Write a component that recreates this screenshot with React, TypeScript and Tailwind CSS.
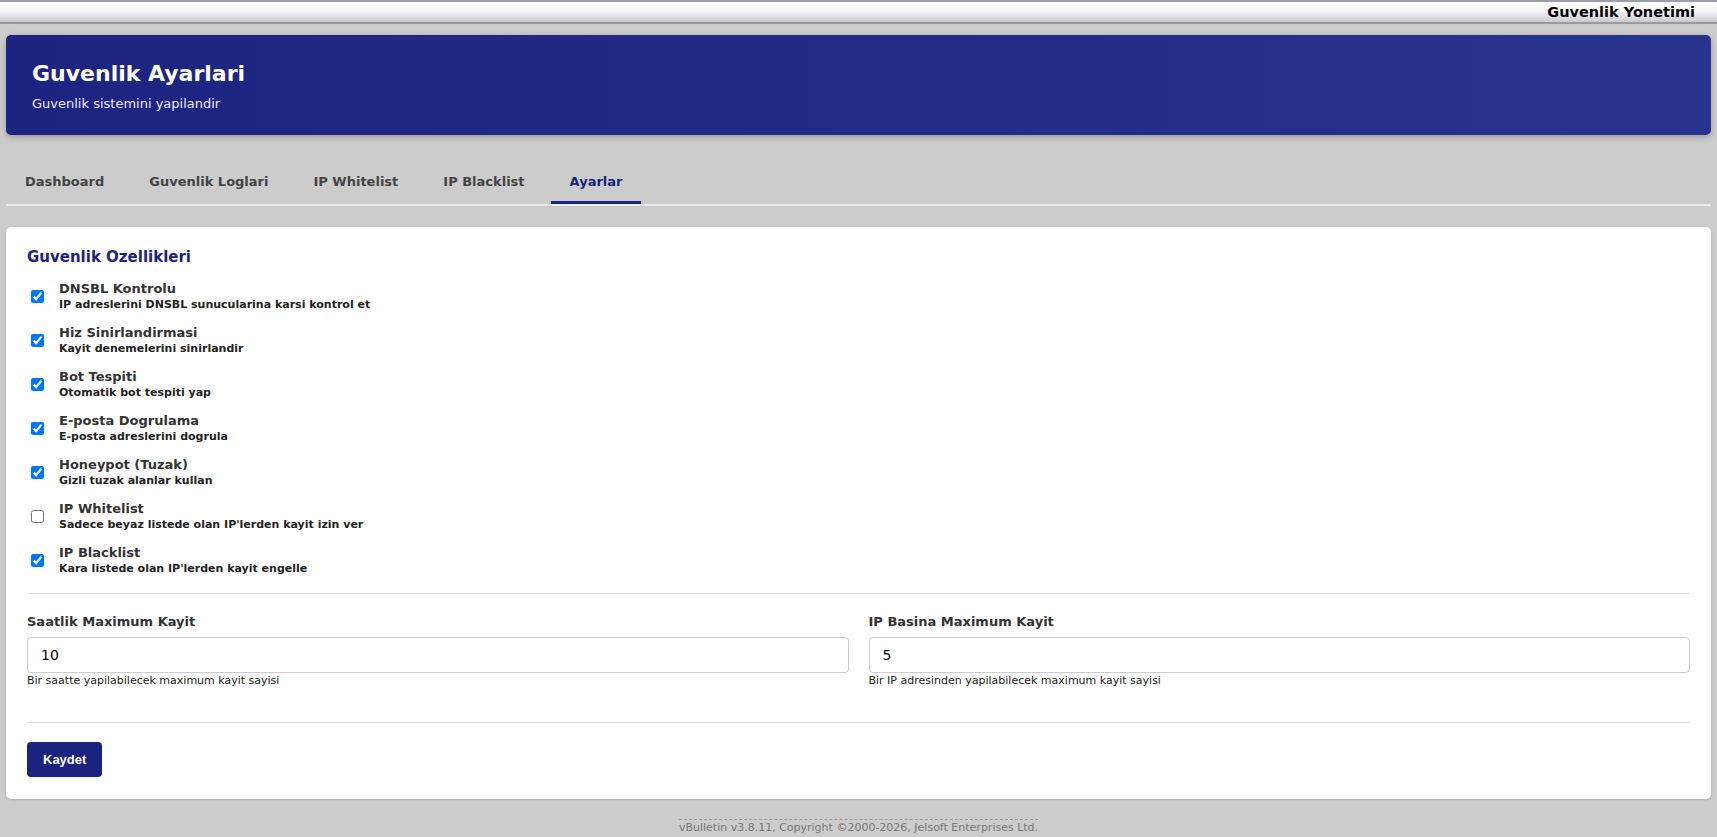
import React from "react";

const features = [
  { title: "DNSBL Kontrolu", desc: "IP adreslerini DNSBL sunucularina karsi kontrol et", checked: true },
  { title: "Hiz Sinirlandirmasi", desc: "Kayit denemelerini sinirlandir", checked: true },
  { title: "Bot Tespiti", desc: "Otomatik bot tespiti yap", checked: true },
  { title: "E-posta Dogrulama", desc: "E-posta adreslerini dogrula", checked: true },
  { title: "Honeypot (Tuzak)", desc: "Gizli tuzak alanlar kullan", checked: true },
  { title: "IP Whitelist", desc: "Sadece beyaz listede olan IP'lerden kayit izin ver", checked: false },
  { title: "IP Blacklist", desc: "Kara listede olan IP'lerden kayit engelle", checked: true },
];

const tabs = ["Dashboard", "Guvenlik Loglari", "IP Whitelist", "IP Blacklist", "Ayarlar"];

export default function App() {
  return (
    <div
      className="min-h-[837px] bg-[#cccccc] text-[#333]"
      style={{ fontFamily: '"DejaVu Sans", Verdana, sans-serif' }}
    >
      {/* Top bar */}
      <div className="h-[24px] border-t-[2px] border-t-[#9c9caa] border-b-[2px] border-b-[#9a9a9a] bg-gradient-to-b from-[#ffffff] via-[#f4f4f6] to-[#c9c9d2] flex items-center justify-end pr-[22px]">
        <span className="text-[14.5px] font-bold text-black leading-[18px]">Guvenlik Yonetimi</span>
      </div>

      <div className="px-[6px] pt-[11px]">
        {/* Header */}
        <div className="rounded-[5px] bg-gradient-to-r from-[#1d2380] to-[#27338f] pl-[26px] pt-[26px] pb-[23px] shadow-[0_2px_6px_rgba(0,0,0,0.25)]">
          <h1 className="text-[22px] leading-[26px] font-bold text-white">Guvenlik Ayarlari</h1>
          <p className="mt-[9px] text-[13px] leading-[16px] text-[#e8eaf6]">Guvenlik sistemini yapilandir</p>
        </div>

        {/* Tabs */}
        <div className="mt-[26px] flex gap-[7px] border-b-[2px] border-[#e9e9ee]">
          {tabs.map((t) => {
            const active = t === "Ayarlar";
            return (
              <div
                key={t}
                className={
                  active
                    ? "px-[19px] pt-[13px] pb-[11px] text-[13px] leading-[16px] font-bold text-[#1a237e] border-b-[3px] border-[#1a237e]"
                    : "px-[19px] pt-[13px] pb-[11px] text-[13px] leading-[16px] font-bold text-[#444] border-b-[3px] border-transparent"
                }
              >
                {t}
              </div>
            );
          })}
        </div>

        {/* Main card */}
        <div className="mt-[21px] rounded-[5px] bg-white px-[21px] pt-[21px] pb-[22px] shadow-[0_1px_3px_rgba(0,0,0,0.15)]">
          <h3 className="text-[15px] leading-[18px] font-bold text-[#1a237e] mb-[15px]">Guvenlik Ozellikleri</h3>

          <div className="flex flex-col gap-[14px]">
            {features.map((f) => (
              <label key={f.title} className="flex items-center">
                <input
                  type="checkbox"
                  defaultChecked={f.checked}
                  className="m-0 ml-[4px] h-[13px] w-[13px]"
                />
                <div className="ml-[15px]">
                  <div className="text-[13px] leading-[16px] font-bold text-[#333]">{f.title}</div>
                  <div className="mt-[1px] text-[11px] leading-[13px] font-bold text-[#222]">{f.desc}</div>
                </div>
              </label>
            ))}
          </div>

          <div className="mt-[18px] border-t border-[#e0e0e0]" />

          <div className="mt-[20px] grid grid-cols-2 gap-[20px]">
            <div>
              <div className="text-[13px] leading-[16px] font-bold text-[#333]">Saatlik Maximum Kayit</div>
              <input
                type="text"
                defaultValue="10"
                className="mt-[7px] block h-[36px] w-full rounded-[4px] border border-[#cccccc] px-[13px] text-[14px] text-black outline-none"
                style={{ fontFamily: '"DejaVu Sans", Verdana, sans-serif' }}
              />
              <div className="mt-[1px] text-[11px] leading-[13px] text-[#222]">Bir saatte yapilabilecek maximum kayit sayisi</div>
            </div>
            <div>
              <div className="text-[13px] leading-[16px] font-bold text-[#333]">IP Basina Maximum Kayit</div>
              <input
                type="text"
                defaultValue="5"
                className="mt-[7px] block h-[36px] w-full rounded-[4px] border border-[#cccccc] px-[13px] text-[14px] text-black outline-none"
                style={{ fontFamily: '"DejaVu Sans", Verdana, sans-serif' }}
              />
              <div className="mt-[1px] text-[11px] leading-[13px] text-[#222]">Bir IP adresinden yapilabilecek maximum kayit sayisi</div>
            </div>
          </div>

          <div className="mt-[35px] border-t border-[#e0e0e0]" />

          <button
            className="mt-[19px] h-[35px] rounded-[4px] bg-[#1a237e] px-[16px] text-[13px] font-bold text-white"
            style={{ fontFamily: '"Liberation Sans", Arial, sans-serif' }}
          >
            Kaydet
          </button>
        </div>

        {/* Footer */}
        <div className="mt-[20px] flex justify-center">
          <div className="border-t border-dashed border-[#999] pt-[1px] text-[11px] leading-[13px] text-[#777]">
            vBulletin v3.8.11, Copyright ©2000-2026, Jelsoft Enterprises Ltd.
          </div>
        </div>
      </div>
    </div>
  );
}
